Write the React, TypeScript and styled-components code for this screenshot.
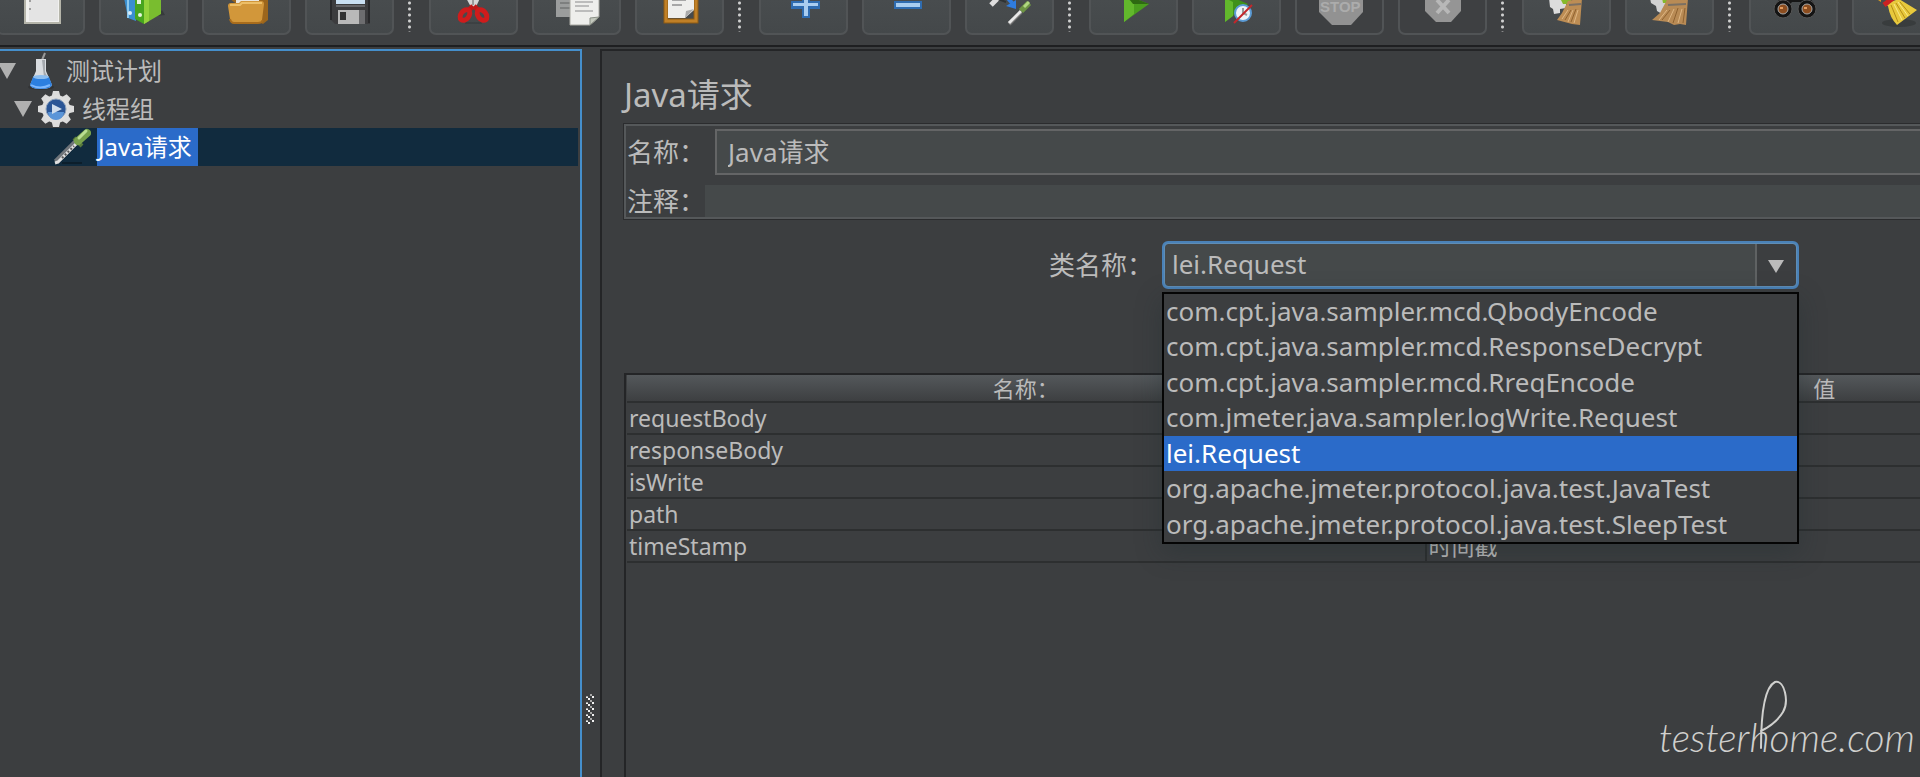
import React from "react";
import styled, { createGlobalStyle, css } from "styled-components";

const GlobalStyle = createGlobalStyle`
  *, *::before, *::after { box-sizing: border-box; }
  html, body { margin: 0; background: #3c3e40; overflow: hidden; }
  body, input, select, button, table {
    font-family: "Noto Sans", "Noto Sans CJK SC", sans-serif;
    font-weight: 400;
    color: #bbbbbb;
  }
`;

const Window = styled.div`
  position: relative;
  display: flex;
  flex-direction: column;
  min-height: 100vh;
  overflow: hidden;
  background: #3c3e40;
  color: #bbbbbb;
`;

/* ---------- toolbar ---------- */

const Toolbar = styled.header`
  display: flex;
  align-items: flex-start;
  height: 47px;
  margin-left: -4px;
  border-bottom: 2px solid #1e1f21;
  background: #3e4042;
  overflow: hidden;
`;

const ToolGroup = styled.div`
  display: flex;
  gap: 14px;
`;

const ToolButton = styled.button`
  flex: none;
  width: 89px;
  height: 35px;
  padding: 0;
  border: 2px solid #515456;
  border-top: 0;
  border-radius: 0 0 7px 7px;
  background: linear-gradient(#484c4e, #44484a);
  &:disabled { background: transparent; }
  svg { display: block; margin-left: -2px; }
`;

const ToolSeparator = styled.div`
  flex: none;
  width: 3px;
  height: 32px;
  margin: 0 18px 0 14px;
  background: radial-gradient(circle, #d0d0d0 1px, transparent 2px) 0 0 / 3px 6px;
`;

function NewIcon() {
  return (
    <>
      <path d="M29-2H64V23H29Z" fill="#f1f1ef" stroke="#b5b5aa" strokeWidth="2" />
      <path d="M33-2H62V21H33Z" fill="#e4e4e4" />
      <circle cx="34" cy="9" r="1" fill="#888" />
      <circle cx="34" cy="1" r="1" fill="#888" />
    </>
  );
}
function TemplatesIcon() {
  return (
    <>
      <path d="M58 16l8-1-3-5z" fill="#2c2f30" opacity=".6" />
      <path d="M25-2l4 20 8 3V-2z" fill="#3a8fd0" />
      <path d="M29-2v20" stroke="#8cc8ee" strokeWidth="2" />
      <path d="M36-2v21l9 5V-2z" fill="#46a51f" />
      <path d="M45-2v26l17-10V-2z" fill="#79bd2f" />
      <path d="M45-2v26l5-3V-2z" fill="#93d33c" />
      <path d="M40-2v6" stroke="#e8f6dd" strokeWidth="4" />
      <circle cx="31" cy="13" r="2" fill="#d8eefb" />
      <circle cx="41" cy="15" r="2" fill="#e8f6dd" />
    </>
  );
}
function OpenIcon() {
  return (
    <>
      <path d="M27-2H66V20l-5 4-4-2z" fill="#9c661c" />
      <path d="M34-2H57V3H34z" fill="#e9e6df" />
      <path d="M26 6q0-3 3-3h8l2-2h20q3 0 3 3l-2 16q-1 3-4 3H32q-4 0-4-4z" fill="#d2973a" />
      <path d="M28 5h10l2-2h20" stroke="#edbf68" strokeWidth="2" fill="none" />
      <path d="M28 19q1 4 4 4h24q4 0 5-3" stroke="#a86c1c" strokeWidth="2" fill="none" />
    </>
  );
}
function SaveIcon() {
  return (
    <>
      <path d="M26-2H65V24H30l-4-4z" fill="#3c3c3e" />
      <path d="M26-2v22M64-2v25" stroke="#29292b" strokeWidth="2" />
      <path d="M31-2H60V4H31z" fill="#c9dff2" />
      <path d="M31 6H60" stroke="#656568" strokeWidth="2" />
      <path d="M33 10H54V24H33z" fill="#b9b9b9" />
      <path d="M54 10h6v14h-6z" fill="#6d6d6f" />
      <path d="M35 12h6v8h-6z" fill="#333" />
    </>
  );
}
function CutIcon() {
  return (
    <>
      <path d="M36 22h17v2H36z" fill="#34383a" opacity=".5" />
      <path d="M37-2h14l-4 9h-5z" fill="#d6d6d6" />
      <path d="M44-2v7" stroke="#9a9a9a" strokeWidth="2" />
      <path d="M44 6l-4 4M45 6l4 4" stroke="#c01818" strokeWidth="5" />
      <ellipse cx="36" cy="15" rx="4" ry="6" transform="rotate(38 36 15)" fill="none" stroke="#cf1c1c" strokeWidth="5" />
      <ellipse cx="53" cy="15" rx="4" ry="6" transform="rotate(-38 53 15)" fill="none" stroke="#cf1c1c" strokeWidth="5" />
    </>
  );
}
function CopyIcon() {
  return (
    <>
      <path d="M24-2H40V17H24z" fill="#9b9d9d" />
      <path d="M28 3h10M28 8h10" stroke="#7d7f7f" strokeWidth="2" />
      <path d="M38-2H67V17l-9 8H38z" fill="#eeeeec" stroke="#a8a8a2" />
      <path d="M58 25v-7l9-1z" fill="#c3c8bd" stroke="#8a8f86" />
      <path d="M43 2h18M43 6h14M43 11h18" stroke="#bcbcbc" strokeWidth="2" />
    </>
  );
}
function PasteIcon() {
  return (
    <>
      <path d="M31-2V21H61V-2" fill="none" stroke="#8e5a12" strokeWidth="5" />
      <path d="M31-2V21H61V-2" fill="none" stroke="#c08027" strokeWidth="3" />
      <path d="M33-2H59V10l-9 8H33z" fill="#eeeeec" />
      <path d="M50 18l1-7 8-2z" fill="#aaa" />
      <path d="M37 0h14M37 5h10" stroke="#a7a7a7" strokeWidth="2" />
    </>
  );
}
function PlusIcon() {
  return (
    <>
      <path d="M32 1h11v-3h8v3h10v8H51v9h-8V9H32z" fill="#2f6cb0" />
      <path d="M34 3h11v-5h4v5h10v3H49v10h-4V6H34z" fill="#a9cdf0" />
    </>
  );
}
function MinusIcon() {
  return (
    <>
      <path d="M32 1h28v8H32z" fill="#2f6cb0" />
      <path d="M34 3h24v4H34z" fill="#a9cdf0" />
    </>
  );
}
function ToggleIcon() {
  return (
    <>
      <path d="M26 5l7-7" stroke="#dedede" strokeWidth="5" />
      <path d="M33-1l8 3" stroke="#2f3233" strokeWidth="2" />
      <path d="M42-3l5 6" stroke="#2f7de0" strokeWidth="4" />
      <path d="M51 0v9l-10-3z" fill="#2f7de0" />
      <path d="M44 24l12-12" stroke="#777" strokeWidth="4" />
      <path d="M44 23l12-12" stroke="#e8e8e8" strokeWidth="3" />
      <path d="M56 11l8-8" stroke="#6d9443" strokeWidth="6" />
      <path d="M59 7l5-5" stroke="#b0d880" strokeWidth="3" />
    </>
  );
}
function StartIcon() {
  return (
    <>
      <path d="M35-6L60 4 35 22z" fill="#4a9e1e" />
      <path d="M35-2v24l10-8V2z" fill="#62b82c" />
      <path d="M60 4L44 4 37-5z" fill="#2e6a12" />
    </>
  );
}
function StartNoPausesIcon() {
  return (
    <>
      <path d="M33-6L56 4 33 22z" fill="#3f911a" />
      <path d="M33-2v24l8-6V2z" fill="#62b82c" />
      <circle cx="51" cy="13" r="8" fill="#eef3f8" stroke="#5b9bd5" strokeWidth="2" />
      <path d="M51 8v5l4 2" stroke="#999" strokeWidth="2" fill="none" />
      <path d="M42 23L60 5" stroke="#c3262b" strokeWidth="2" />
    </>
  );
}
function StopIcon() {
  return (
    <>
      <path d="M24-2H68V12L56 25H37L24 12z" fill="#929292" />
      <text x="25" y="12" fontSize="15" fontWeight="700" fontFamily="Liberation Sans, sans-serif" fill="#acacac">STOP</text>
    </>
  );
}
function ShutdownIcon() {
  return (
    <>
      <path d="M27-2H63V11L53 22H38L27 11z" fill="#959595" />
      <path d="M39 13L51 0M39 0L51 13" stroke="#b8b8b8" strokeWidth="4" />
    </>
  );
}
function ClearIcon() {
  return (
    <>
      <path d="M27-2H44V8l-6 1v4l-6 1-1-5-3-2z" fill="#dcdcdc" />
      <path d="M38-2H49V4h-8z" fill="#86b92b" />
      <path d="M46 1l14-3-2 27-8-1-15-4 5-7z" fill="#bd8d54" />
      <path d="M47 5l12-1" stroke="#7b7063" strokeWidth="2" />
      <path d="M46 10l-6 9M51 10l-5 12M56 10l-4 13" stroke="#dfb784" fill="none" />
      <path d="M49 10l-6 10M54 9l-5 13" stroke="#8e6231" fill="none" />
    </>
  );
}
function ClearAllIcon() {
  return (
    <>
      <path d="M25-2H42V8l-5 1v5l-5-3-1-5-5-3z" fill="#d2d2d2" />
      <path d="M37-2H45V3h-7z" fill="#86b92b" />
      <path d="M43-2H63L61 25l-6-1-6 1-6-3-16-2 8-7z" fill="#b98b55" />
      <path d="M43 5l18-1" stroke="#7b7063" strokeWidth="2" />
      <path d="M42 10l-8 10M49 9l-6 13M57 9l-4 14" stroke="#dfb784" fill="none" />
      <path d="M45 10l-8 10M53 8l-5 15M60 8l-2 15" stroke="#8e6231" fill="none" />
    </>
  );
}
function SearchIcon() {
  return (
    <>
      <path d="M27 5l4-7h30l5 7-9 3-6-6h-8l-5 6z" fill="#161616" />
      <circle cx="34" cy="9" r="9" fill="#141414" stroke="#555" />
      <circle cx="58" cy="9" r="9" fill="#141414" stroke="#555" />
      <circle cx="34" cy="9" r="5" fill="#8c4d1f" stroke="#a8a8a8" />
      <circle cx="58" cy="9" r="5" fill="#8c4d1f" stroke="#a8a8a8" />
      <path d="M31 8h3M55 8h3" stroke="#e39a5d" strokeWidth="2" />
    </>
  );
}
function ResetSearchIcon() {
  return (
    <>
      <ellipse cx="47" cy="23" rx="17" ry="4" fill="#303334" opacity=".6" />
      <path d="M26 0l3-2v4z" fill="#d79a1d" />
      <path d="M32 4L47-1 65 10 45 25q-7-7-9-19z" fill="#e8c93c" />
      <path d="M39 5l7 17M44 3l9 15M48 2l10 12" stroke="#b58d16" strokeWidth="1" />
      <path d="M42 4l8 16M46 2l10 14" stroke="#fae98a" strokeWidth="1" />
      <path d="M32 5l9-7" stroke="#cb2222" strokeWidth="5" />
    </>
  );
}

type Tool = { label: string; icon: () => React.JSX.Element; off?: boolean };

const toolGroups: Tool[][] = [
  [
    { label: "新建", icon: NewIcon },
    { label: "模板", icon: TemplatesIcon },
    { label: "打开", icon: OpenIcon },
    { label: "保存", icon: SaveIcon },
  ],
  [
    { label: "剪切", icon: CutIcon },
    { label: "复制", icon: CopyIcon },
    { label: "粘贴", icon: PasteIcon },
  ],
  [
    { label: "展开", icon: PlusIcon },
    { label: "折叠", icon: MinusIcon },
    { label: "切换", icon: ToggleIcon },
  ],
  [
    { label: "启动", icon: StartIcon },
    { label: "无停顿启动", icon: StartNoPausesIcon },
    { label: "停止", icon: StopIcon, off: true },
    { label: "关闭", icon: ShutdownIcon, off: true },
  ],
  [
    { label: "清除", icon: ClearIcon },
    { label: "清除全部", icon: ClearAllIcon },
  ],
  [
    { label: "搜索", icon: SearchIcon },
    { label: "重置搜索", icon: ResetSearchIcon },
  ],
];

/* ---------- split panes ---------- */

const Split = styled.div`
  flex: 1;
  display: flex;
  padding-top: 2px;
`;

const TreePane = styled.nav`
  flex: none;
  width: 582px;
  padding: 1px 2px 0 0;
  border-top: 2px solid #458fcc;
  border-right: 2px solid #458fcc;
  overflow: hidden;
`;

const Divider = styled.div`
  flex: none;
  width: 18px;
  padding: 645px 0 0 4px;
  svg { display: block; }
`;

const DetailPane = styled.main`
  flex: 1;
  min-width: 0;
  padding: 21px 0 0 22px;
  border-top: 2px solid #242527;
  border-left: 2px solid #242527;
  overflow: hidden;
`;

/* ---------- tree ---------- */

const TreeList = styled.ul`
  margin: 0;
  padding: 0;
  list-style: none;
`;

const TreeRow = styled.li<{ $level: number; $selected?: boolean }>`
  display: flex;
  align-items: center;
  gap: 6px;
  height: 38px;
  padding-left: ${(p) => p.$level * 16}px;
  ${(p) => p.$selected && css`background: #112b3e;`}
  svg { flex: none; margin-left: -2px; }
  svg:first-child { margin-right: 2px; }
`;

const TreeLabel = styled.span<{ $selected?: boolean }>`
  height: 38px;
  padding: 0 6px 0 1px;
  font-size: 24px;
  line-height: 38px;
  ${(p) => p.$selected && css`background: #2b6bc9; color: #ffffff;`}
`;

const Twisty = ({ open }: { open: boolean }) => (
  <svg width="18" height="18" aria-hidden="true">
    {open && <path d="M0 1H18L9 17z" fill="#b0b0b0" />}
  </svg>
);

const FlaskIcon = () => (
  <svg width="37" height="38" aria-hidden="true">
    <ellipse cx="19" cy="35" rx="13" ry="3" fill="#2b2d2f" opacity=".6" />
    <path d="M20 8l3-7" stroke="#9a9a9a" strokeWidth="2" />
    <path d="M14 7h10v12l6 14q-1 4-11 4T8 33l6-14z" fill="#d9dce0" />
    <path d="M20 8h3v12l4 8-5-3z" fill="#a5a9ae" />
    <path d="M11 25h16l3 8q-1 4-11 4T8 33z" fill="#2c7fe0" />
    <ellipse cx="19" cy="25" rx="8" ry="2" fill="#8bbdf0" />
    <path d="M9 33q9 5 19 0" stroke="#7db8ff" strokeWidth="2" fill="none" />
  </svg>
);

const GearIcon = () => (
  <svg width="37" height="38" viewBox="-18 -19 37 38" aria-hidden="true">
    {[0, 45, 90, 135].map((a) => (
      <path key={a} d="M-3-18H3L5-10V10L3 18H-3L-5 10V-10z" transform={`rotate(${a})`} fill="#dcdcdc" />
    ))}
    <circle r="14" fill="#dedede" />
    <circle r="10" fill="#2a5596" stroke="#8fa3bd" strokeWidth="1" />
    <path d="M-8 3A8 8 0 0 0 8 3z" fill="#5b95d8" />
    <path d="M-4-5L6 0-4 5z" fill="#cfdcec" />
  </svg>
);

const DropperIcon = () => (
  <svg width="37" height="38" aria-hidden="true">
    <path d="M8 35h20" stroke="#0c1e2b" strokeWidth="2" />
    <path d="M2 34L23 13" stroke="#70757a" strokeWidth="6" />
    <path d="M1 35l3-1L24 14" stroke="#e0e0e0" strokeWidth="3" fill="none" />
    <path d="M8 30L20 18" stroke="#555" strokeWidth="2" strokeDasharray="2 2" />
    <path d="M20 10l8 8" stroke="#57793c" strokeWidth="4" />
    <path d="M24 13L33 5" stroke="#77a04c" strokeWidth="8" strokeLinecap="round" />
    <path d="M25 10l7-7" stroke="#bbdd92" strokeWidth="3" strokeLinecap="round" />
  </svg>
);

const GripIcon = () => (
  <svg width="9" height="31" aria-hidden="true">
    {[0, 6, 12, 18, 24].map((y) => (
      <g key={y}>
        <path d={`M4 ${y}h2v2h-2zM0 ${y + 2}h2v2H0zM2 ${y + 4}h2v2H2z`} fill="#a8a8a8" />
        <path d={`M6 ${y + 2}h2v2H6zM0 ${y + 3}h2v1H0zM2 ${y + 4}h2v2H2z`} fill="#f2f2f2" />
      </g>
    ))}
  </svg>
);

/* ---------- detail form ---------- */

/* The form is laid out wider than the visible pane and runs past its right edge. */
const Form = styled.form`
  display: flex;
  flex-direction: column;
  width: calc(100% + 304px);
`;

const Title = styled.h1`
  margin: 0;
  height: 52px;
  font-size: 33px;
  font-weight: 400;
  line-height: 46px;
`;

const FieldBox = styled.section`
  display: flex;
  flex-direction: column;
  height: 95px;
  padding: 2px 0 0 1px;
  border: 2px solid #55585a;
  outline: 1px solid #2b2c2e;
`;

const Field = styled.div`
  display: flex;
  align-items: center;
  font-size: 26px;
  line-height: 36px;
  &:first-child { gap: 10px; height: 47px; }
  &:last-child { height: 42px; padding-top: 9px; }
`;

const FieldLabel = styled.label`
  flex: none;
  width: 78px;
  white-space: nowrap;
`;

const NameInput = styled.input`
  flex: 1;
  height: 46px;
  padding: 0 11px 2px;
  border: 2px solid #646566;
  background: #45494a;
  font-size: 26px;
`;

const CommentInput = styled.input`
  flex: 1;
  height: 32px;
  padding: 0 11px;
  border: 0;
  background: #45494a;
  font-size: 26px;
`;

const ClassRow = styled.div`
  display: flex;
  justify-content: center;
  align-items: center;
  gap: 9px;
  margin: 22px 0 84px;
  font-size: 26px;
  line-height: 36px;
`;

const Combo = styled.div`
  position: relative;
  flex: none;
  width: 637px;
`;

const ComboSelect = styled.select`
  display: block;
  width: 100%;
  height: 48px;
  padding: 0 50px 2px 7px;
  border: 3px solid #4a82b8;
  border-radius: 6px;
  outline: 1px solid #5f8db5;
  outline-offset: -3px;
  appearance: none;
  background: linear-gradient(#5f6263, #5f6263) right 39px top / 2px 100% no-repeat,
    linear-gradient(#3c3e40, #3c3e40) right top / 39px 100% no-repeat, #45494a;
  font-size: 26px;
`;

const ComboArrow = styled.svg`
  position: absolute;
  right: 15px;
  top: 18px;
  pointer-events: none;
`;

const Popup = styled.ul`
  position: absolute;
  z-index: 2;
  top: 51px;
  left: 0;
  right: 0;
  display: grid;
  grid-auto-rows: 1fr;
  height: 252px;
  margin: 0;
  padding: 0;
  border: 2px solid #050505;
  box-shadow: 0 8px 24px rgba(30, 42, 46, 0.35);
  background: #3c3e40;
  list-style: none;
`;

const PopupItem = styled.li<{ $selected: boolean }>`
  padding-left: 2px;
  font-size: 26px;
  line-height: 35px;
  ${(p) => p.$selected && css`background: #2b6bc9; color: #ffffff;`}
`;

/* ---------- parameter table ---------- */

const TableFrame = styled.div`
  height: 420px;
  padding: 0 0 0 1px;
  border: 2px solid #242527;
`;

const ParamTable = styled.table`
  width: 100%;
  table-layout: fixed;
  border-collapse: separate;
  border-spacing: 0;
  th {
    height: 28px;
    padding: 0;
    border-bottom: 2px solid #2d2f30;
    background: linear-gradient(#54585b, #3d3f41);
    font-size: 22px;
    font-weight: 400;
    line-height: 26px;
  }
  td {
    height: 32px;
    padding: 0 2px;
    border-bottom: 2px solid #2d2f30;
    font-size: 23px;
    line-height: 30px;
  }
  td + td, th + th { border-left: 2px solid #2d2f30; }
`;

/* ---------- watermark ---------- */

const Watermark = styled.div`
  position: absolute;
  right: 5px;
  bottom: 34px;
  font: italic 300 39px/44px Lato, sans-serif;
  color: #d0d0ce;
  svg { position: absolute; right: 126px; bottom: 9px; }
`;

const classNames = [
  "com.cpt.java.sampler.mcd.QbodyEncode",
  "com.cpt.java.sampler.mcd.ResponseDecrypt",
  "com.cpt.java.sampler.mcd.RreqEncode",
  "com.jmeter.java.sampler.logWrite.Request",
  "lei.Request",
  "org.apache.jmeter.protocol.java.test.JavaTest",
  "org.apache.jmeter.protocol.java.test.SleepTest",
];
const currentClass = "lei.Request";

const params = [
  ["requestBody", ""],
  ["responseBody", ""],
  ["isWrite", ""],
  ["path", ""],
  ["timeStamp", "时间戳"],
];

export default function App() {
  return (
    <Window>
      <GlobalStyle />
      <Toolbar>
        {toolGroups.map((group, i) => (
          <React.Fragment key={i}>
            {i > 0 && <ToolSeparator />}
            <ToolGroup>
              {group.map(({ label, icon: Icon, off }) => (
                <ToolButton key={label} type="button" aria-label={label} disabled={off}>
                  <svg width="89" height="33" aria-hidden="true">
                    <Icon />
                  </svg>
                </ToolButton>
              ))}
            </ToolGroup>
          </React.Fragment>
        ))}
      </Toolbar>

      <Split>
        <TreePane>
          <TreeList role="tree">
            <TreeRow role="treeitem" $level={0}>
              <Twisty open />
              <FlaskIcon />
              <TreeLabel>测试计划</TreeLabel>
            </TreeRow>
            <TreeRow role="treeitem" $level={1}>
              <Twisty open />
              <GearIcon />
              <TreeLabel>线程组</TreeLabel>
            </TreeRow>
            <TreeRow role="treeitem" aria-selected="true" $level={2} $selected>
              <Twisty open={false} />
              <DropperIcon />
              <TreeLabel $selected>Java请求</TreeLabel>
            </TreeRow>
          </TreeList>
        </TreePane>

        <Divider>
          <GripIcon />
        </Divider>

        <DetailPane>
          <Form>
            <Title>Java请求</Title>
            <FieldBox>
              <Field>
                <FieldLabel htmlFor="name">名称：</FieldLabel>
                <NameInput id="name" defaultValue="Java请求" />
              </Field>
              <Field>
                <FieldLabel htmlFor="comment">注释：</FieldLabel>
                <CommentInput id="comment" />
              </Field>
            </FieldBox>

            <ClassRow>
              <label htmlFor="class">类名称：</label>
              <Combo>
                <ComboSelect id="class" defaultValue={currentClass}>
                  {classNames.map((name) => (
                    <option key={name}>{name}</option>
                  ))}
                </ComboSelect>
                <ComboArrow width="16" height="14" aria-hidden="true">
                  <path d="M0 1H16L8 14z" fill="#bbbbbb" />
                </ComboArrow>
                <Popup role="listbox">
                  {classNames.map((name) => (
                    <PopupItem
                      key={name}
                      role="option"
                      aria-selected={name === currentClass}
                      $selected={name === currentClass}
                    >
                      {name}
                    </PopupItem>
                  ))}
                </Popup>
              </Combo>
            </ClassRow>

            <TableFrame>
              <ParamTable>
                <thead>
                  <tr>
                    <th>名称：</th>
                    <th>值</th>
                  </tr>
                </thead>
                <tbody>
                  {params.map(([name, value]) => (
                    <tr key={name}>
                      <td>{name}</td>
                      <td>{value}</td>
                    </tr>
                  ))}
                </tbody>
              </ParamTable>
            </TableFrame>
          </Form>
        </DetailPane>
      </Split>

      <Watermark>
        testerhome.com
        <svg width="34" height="70" aria-hidden="true">
          <path
            d="M6 68C6 40 8 8 20 2C30 0 34 22 28 32C22 42 12 48 6 51"
            fill="none"
            stroke="#d0d0ce"
            strokeWidth="2"
            strokeLinecap="round"
          />
        </svg>
      </Watermark>
    </Window>
  );
}
